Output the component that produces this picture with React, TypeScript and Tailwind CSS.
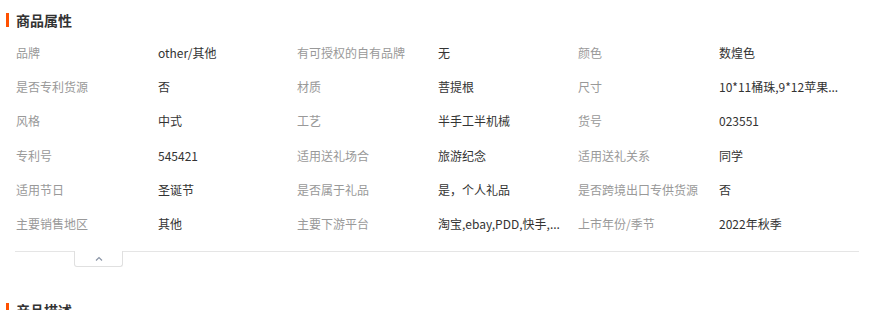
import React from "react";

const rows: [string, string][][] = [
  [["品牌", "other/其他"], ["有可授权的自有品牌", "无"], ["颜色", "数煌色"]],
  [["是否专利货源", "否"], ["材质", "菩提根"], ["尺寸", "10*11桶珠,9*12苹果..."]],
  [["风格", "中式"], ["工艺", "半手工半机械"], ["货号", "023551"]],
  [["专利号", "545421"], ["适用送礼场合", "旅游纪念"], ["适用送礼关系", "同学"]],
  [["适用节日", "圣诞节"], ["是否属于礼品", "是，个人礼品"], ["是否跨境出口专供货源", "否"]],
  [["主要销售地区", "其他"], ["主要下游平台", "淘宝,ebay,PDD,快手,..."], ["上市年份/季节", "2022年秋季"]],
];

export default function App() {
  const font = { fontFamily: '"Noto Sans CJK SC", "Noto Sans", sans-serif' };
  return (
    <div className="w-[873px] h-[310px] bg-white overflow-hidden" style={font}>
      <div className="pt-[13px] flex items-center">
        <div className="ml-[6px] w-[3px] h-[14px] bg-[#ff5000]" />
        <div className="ml-[7px] text-[14px] leading-[14px] font-bold text-[#333]">商品属性</div>
      </div>
      <div className="ml-[15px] w-[844px] mt-[9px] pb-[10px] border-b border-[#e5e5e5]">
        {rows.map((row, i) => (
          <div
            key={i}
            className="grid grid-cols-[143px_138px_142px_139px_142px_1fr] h-[34.2px] items-center text-[12px] leading-[16px]"
          >
            {row.map(([k, v], j) => (
              <React.Fragment key={j}>
                <div className="pl-[1px] text-[#999] whitespace-nowrap">{k}</div>
                <div className="text-[#333] whitespace-nowrap">{v}</div>
              </React.Fragment>
            ))}
          </div>
        ))}
      </div>
      <div className="ml-[74px] -mt-px w-[49px] h-[16px] bg-white border-x border-b border-[#e0e0e0] rounded-b-[3px] flex items-center justify-center">
        <svg width="8" height="5" viewBox="0 0 8 5" fill="none">
          <path d="M1 4.5L4 1.5L7 4.5" stroke="#8a94a6" strokeWidth="1.2" />
        </svg>
      </div>
      <div className="mt-[36px] flex items-center">
        <div className="ml-[6px] w-[3px] h-[14px] bg-[#ff5000]" />
        <div className="ml-[7px] text-[14px] leading-[14px] font-bold text-[#333]">产品描述</div>
      </div>
    </div>
  );
}
